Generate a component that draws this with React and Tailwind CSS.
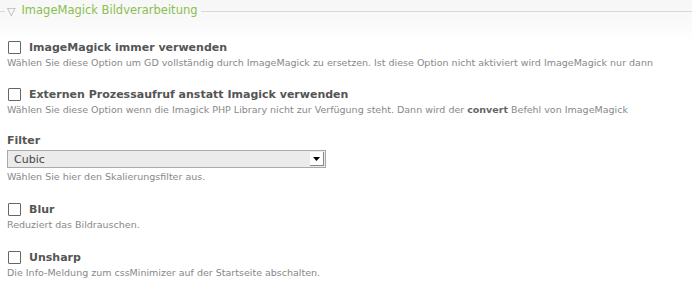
import React from "react";

const font = { fontFamily: '"DejaVu Sans", Verdana, sans-serif' };

function Box() {
  return <span className="w-[13px] h-[13px] border border-[#666] bg-white ml-[8px] mr-[8px] rounded-[1px] shrink-0" />;
}

function Check({ label, desc, className = "" }) {
  return (
    <div className={className}>
      <div className="flex items-center h-[14px]">
        <Box />
        <span className="text-[11px] font-bold text-[#555] leading-none">{label}</span>
      </div>
      <div className="text-[9.5px] text-[#888] mt-[2px] ml-[7px] leading-[13px] whitespace-nowrap">{desc}</div>
    </div>
  );
}

export default function App() {
  return (
    <div className="w-[700px] h-[289px] bg-white overflow-hidden" style={font}>
      <div className="w-[692px] bg-gradient-to-b from-[#f7f7f7] via-[#f9f9f9] to-white h-[40px] pt-[3px]">
        <div className="flex items-center h-[16px]">
          <div className="w-[5px] h-px bg-[#d8d8d8]" />
          <span className="text-[11.5px] text-[#88bf50] leading-none whitespace-nowrap flex items-center">
            <span className="text-[11px] text-[#a8a8a8] ml-[2px] mr-[6px]">▽</span>ImageMagick Bildverarbeitung
          </span>
          <div className="flex-1 h-px bg-[#d8d8d8] ml-[3px]" />
        </div>
      </div>
      <Check
        label="ImageMagick immer verwenden"
        desc="Wählen Sie diese Option um GD vollständig durch ImageMagick zu ersetzen. Ist diese Option nicht aktiviert wird ImageMagick nur dann"
      />
      <div className="mt-[18px]">
        <div className="flex items-center h-[14px]">
          <Box />
          <span className="text-[11px] font-bold text-[#555] leading-none">Externen Prozessaufruf anstatt Imagick verwenden</span>
        </div>
        <div className="text-[9.5px] text-[#888] mt-[2px] ml-[7px] leading-[13px] whitespace-nowrap">
          Wählen Sie diese Option wenn die Imagick PHP Library nicht zur Verfügung steht. Dann wird der{" "}
          <b className="text-[#666]">convert</b> Befehl von ImageMagick
        </div>
      </div>
      <div className="mt-[18px] ml-[7px]">
        <div className="text-[11px] font-bold text-[#555] leading-[14px]">Filter</div>
        <div className="mt-[2px] w-[319px] h-[18px] border border-[#a9a9a9] bg-[#ebebeb] flex items-center justify-between">
          <span className="text-[11px] text-[#444] ml-[6px] leading-none">Cubic</span>
          <span className="w-[14px] h-[14px] mr-[1px] bg-white border-r border-b border-[#888] flex items-center justify-center">
            <svg width="7" height="4" viewBox="0 0 7 4"><path d="M0 0h7L3.5 4z" fill="#000" /></svg>
          </span>
        </div>
        <div className="text-[9.5px] text-[#888] mt-[2px] leading-[13px]">Wählen Sie hier den Skalierungsfilter aus.</div>
      </div>
      <Check className="mt-[19px]" label="Blur" desc="Reduziert das Bildrauschen." />
      <Check className="mt-[19px]" label="Unsharp" desc="Die Info-Meldung zum cssMinimizer auf der Startseite abschalten." />
    </div>
  );
}
